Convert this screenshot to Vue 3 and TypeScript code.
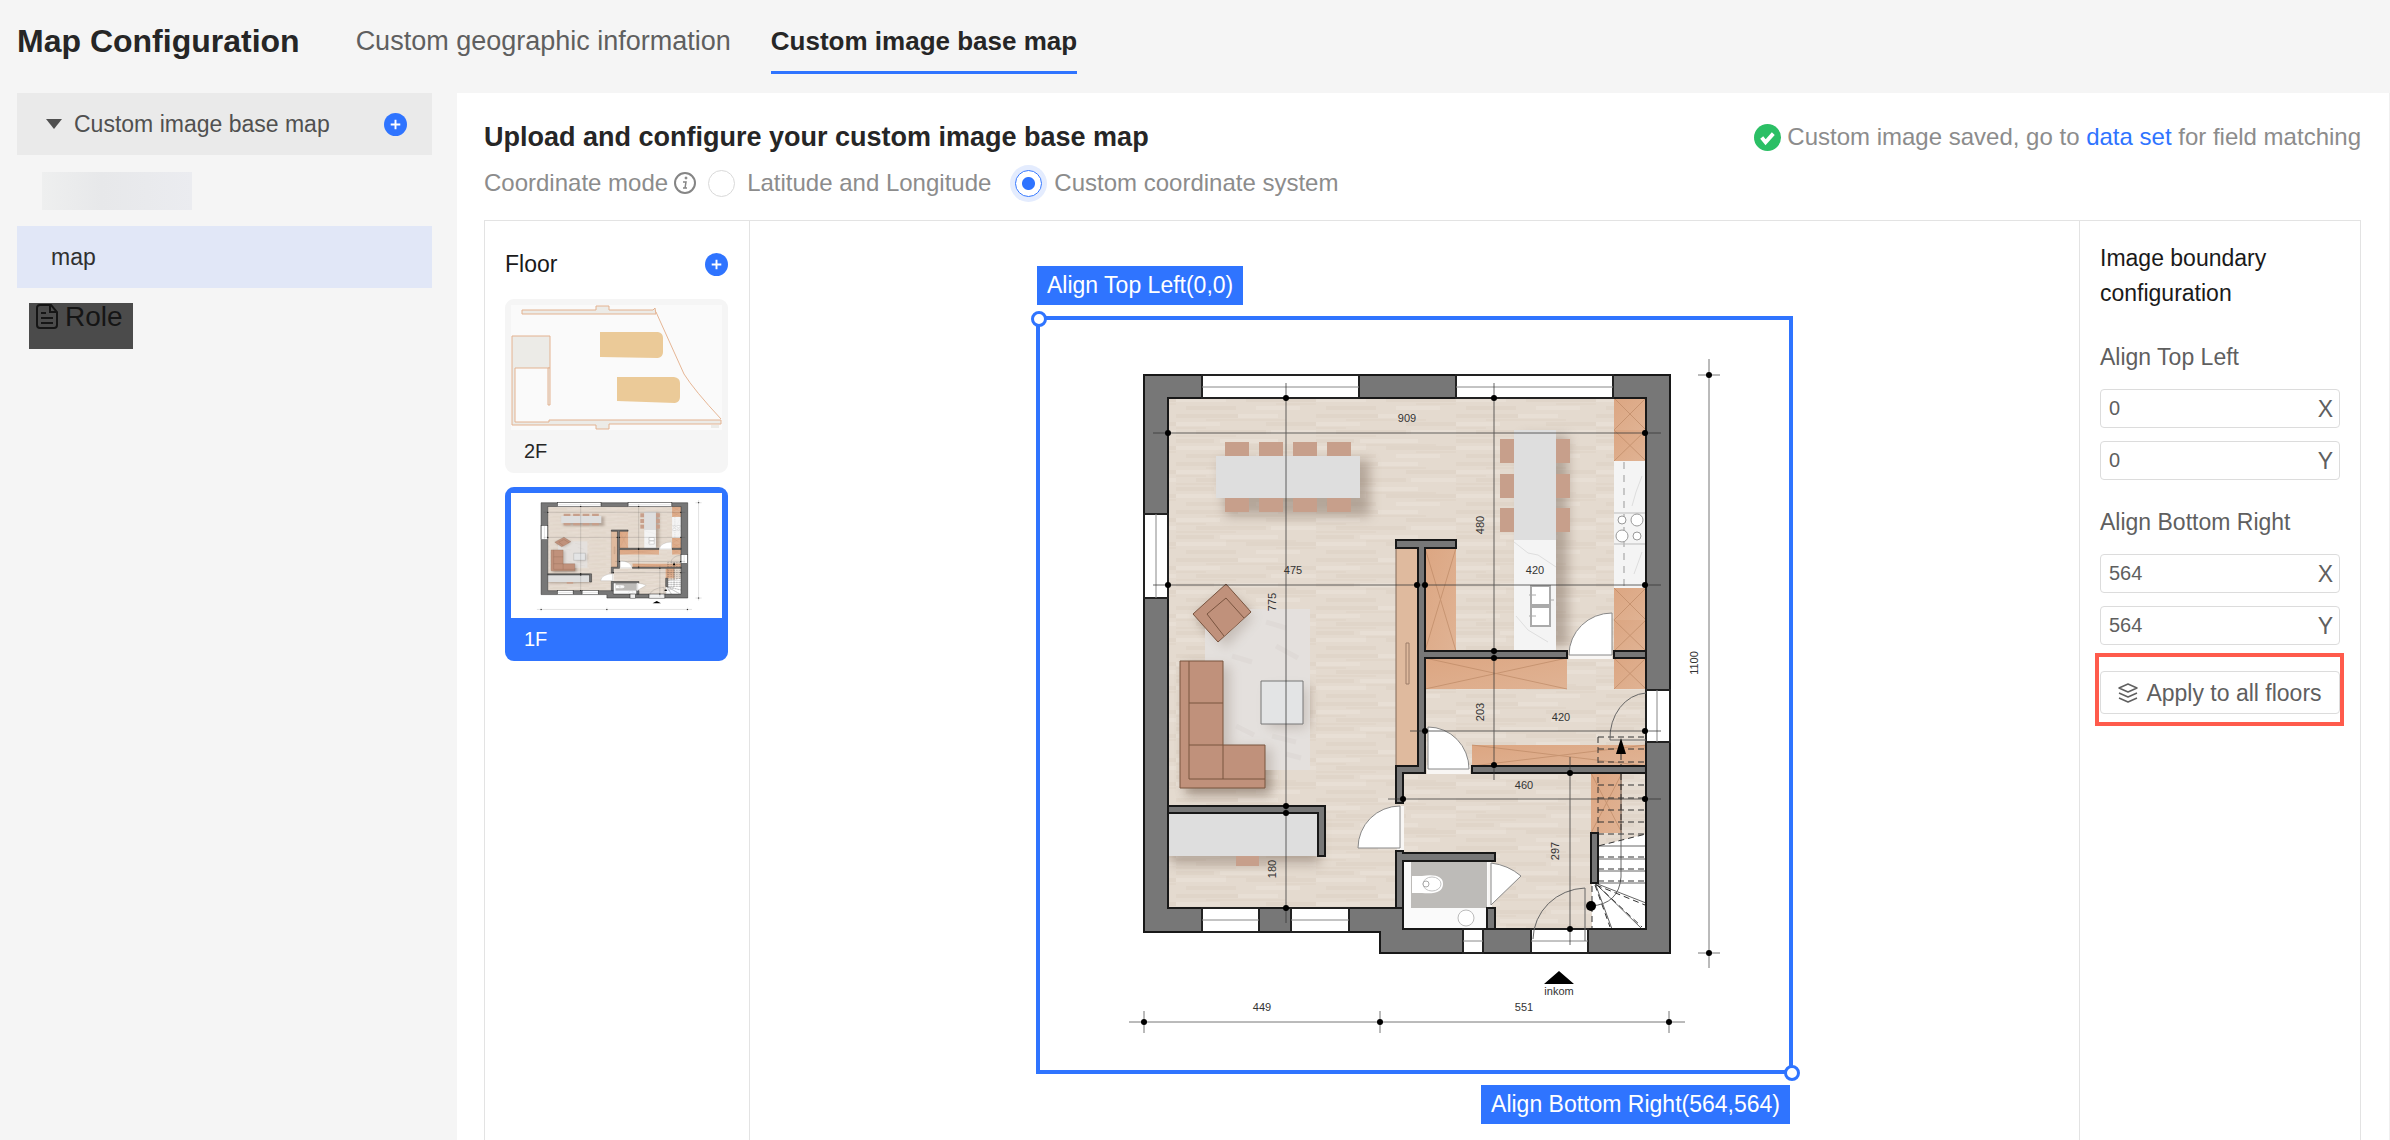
<script setup lang="ts">
import { computed, reactive, ref } from 'vue'

interface Floor {
  id: string
  name: string
}
interface Corner {
  key: string
  title: string
  x: string
  y: string
}
interface Dimension {
  text: string
  x: number
  y: number
  upright?: boolean
}
type Box = [number, number, number, number]

const tabs = ['Custom geographic information', 'Custom image base map']
const activeTab = ref(tabs[1])

const floors: Floor[] = [
  { id: 'f2', name: '2F' },
  { id: 'f1', name: '1F' },
]
const activeFloor = ref('f1')
const mode = ref('custom')

const corners = reactive<Corner[]>([
  { key: 'tl', title: 'Align Top Left', x: '0', y: '0' },
  { key: 'br', title: 'Align Bottom Right', x: '564', y: '564' },
])
const topLeft = computed(() => `${corners[0].title}(${corners[0].x},${corners[0].y})`)
const bottomRight = computed(() => `${corners[1].title}(${corners[1].x},${corners[1].y})`)

/* Boxes are x, y, width, height in plan units. */
const windows: Box[] = [
  [166, 59, 157, 23],
  [420, 59, 157, 23],
  [108, 198, 24, 84],
  [166, 592, 57, 24],
  [255, 592, 58, 24],
  [427, 613, 20, 24],
  [495, 613, 57, 24],
  [610, 374, 24, 52],
]
const chairs: Box[] = [
  ...[189, 223, 257, 291].flatMap((x): Box[] => [
    [x, 126, 24, 14],
    [x, 182, 24, 14],
  ]),
  ...[123, 158, 192].flatMap((y): Box[] => [
    [464, y, 14, 24],
    [520, y, 14, 24],
  ]),
]
const cabinets: Box[] = [
  [389, 232, 31, 103],
  [578, 82, 32, 32],
  [578, 114, 32, 31],
  [578, 272, 32, 32],
  [578, 304, 32, 31],
  [389, 342, 142, 31],
  [578, 342, 32, 31],
  [436, 429, 174, 21],
  [555, 457, 31, 60],
]
const dots: [number, number][] = [
  [132, 117], [609, 117], [132, 269], [381, 269], [389, 269], [609, 269],
  [250, 82], [250, 490], [250, 497], [250, 592],
  [458, 82], [458, 335], [458, 342], [458, 449],
  [389, 415], [609, 415], [367, 483], [609, 483], [534, 457], [534, 613],
  [673, 59], [673, 637], [108, 706], [344, 706], [633, 706],
]
const dimensions: Dimension[] = [
  { text: '909', x: 371, y: 102 },
  { text: '475', x: 257, y: 254 },
  { text: '420', x: 499, y: 254 },
  { text: '775', x: 236, y: 286, upright: true },
  { text: '480', x: 444, y: 209, upright: true },
  { text: '203', x: 444, y: 396, upright: true },
  { text: '420', x: 525, y: 401 },
  { text: '460', x: 488, y: 469 },
  { text: '297', x: 519, y: 535, upright: true },
  { text: '180', x: 236, y: 553, upright: true },
  { text: '1100', x: 658, y: 347, upright: true },
  { text: '449', x: 226, y: 691 },
  { text: '551', x: 488, y: 691 },
  { text: 'inkom', x: 523, y: 675 },
]
const crossPath = ([x, y, w, h]: Box) => `M${x} ${y}l${w} ${h}M${x + w} ${y}l${-w} ${h}`
</script>

<template>
  <div class="page">
    <svg class="defs" aria-hidden="true">
      <defs>
        <pattern id="wood" width="140" height="48" patternUnits="userSpaceOnUse">
          <rect width="140" height="48" fill="#e4dacf" />
          <path d="M0 4h62M90 12h50M20 20h70M0 29h38M70 36h70M10 44h50" stroke="#e0d5c9" stroke-width="4" />
          <path d="M62 4h40M0 12h44M95 20h45M44 29h58M0 36h50M80 44h44" stroke="#e8dfd5" stroke-width="4" />
          <path d="M30 8h80M0 24h60M50 33h70M100 40h40M0 16h30" stroke="#dfd3c6" />
        </pattern>
        <linearGradient id="cabinet" x2="1" y2="1">
          <stop offset="0" stop-color="#dca682" />
          <stop offset="1" stop-color="#e0b394" />
        </linearGradient>
        <filter id="soft" x="-30%" y="-30%" width="160%" height="160%">
          <feGaussianBlur stdDeviation="6" />
        </filter>
      </defs>
      <symbol id="plan" viewBox="0 0 757 758" preserveAspectRatio="none">
        <path d="M132 82H610V613H367V592H132z" fill="url(#wood)" />
        <g fill="#6e5a4c" opacity=".4" filter="url(#soft)">
          <path d="M184 144H334V200H190zM486 120H532V330H486zM150 350H192V432H234V478H150zM230 370H272V412H230zM134 500H284V548H134zM160 300L190 276L218 300L186 332z" />
        </g>
        <!-- living room -->
        <path d="M169 293H274V454H169z" fill="#e4e0dd" />
        <g fill="#6e5a4c" opacity=".25" filter="url(#soft)">
          <path d="M150 350H194V432H236V478H150zM232 372H270V412H232zM165 304L190 284L218 300L190 332z" />
        </g>
        <path d="M176 300l12 9M230 306l20 6M240 330l22 12M196 340l20 6M236 420l24 6M200 410l18 9M250 438l15 4" stroke="#d4ceca" stroke-width="5" opacity=".3" />
        <g class="chair">
          <rect v-for="(c, i) in chairs" :key="i" :x="c[0]" :y="c[1]" :width="c[2]" :height="c[3]" />
          <path d="M200 540h23v10h-23z" />
        </g>
        <path d="M180 140H324V182H180zM132 497H282V540H132zM478 114H520V224H478z" fill="#dedede" />
        <g class="seat">
          <path d="M190 268L215 296L182 326L157 298z" />
          <path d="M208 302L190 282L171 298L188 320" />
          <path d="M144 345H187V429H229V472H144z" />
          <path d="M153 345V463H229M153 387H187M153 429H187V463" fill="none" />
        </g>
        <path d="M225 365h42v43h-42z" fill="#e3e4e5" stroke="#777" />
        <!-- cabinets -->
        <path d="M360 232h22v218h-22z" fill="#dfba9e" stroke="#806858" />
        <path d="M370 327h3v41h-3z" fill="none" stroke="#9c7d68" />
        <g v-for="(c, i) in cabinets" :key="i">
          <rect :x="c[0]" :y="c[1]" :width="c[2]" :height="c[3]" fill="url(#cabinet)" />
          <path :d="crossPath(c)" stroke="#b88460" opacity=".6" />
        </g>
        <!-- kitchen -->
        <path d="M578 145h32v127h-32zM478 224h42v110h-42z" fill="#f4f4f4" />
        <path d="M478 226l14 11 10 2 18 12M480 300l12 14 20 12M606 160l-6 16-4 14M606 236l-8 22" fill="none" stroke="#dedede" />
        <path d="M588 146V270" stroke="#999" stroke-dasharray="7 6" />
        <path d="M578 197h32M578 228h32" stroke="#bbb" />
        <g fill="#fff" stroke="#999">
          <circle cx="586" cy="204" r="4" />
          <circle cx="601" cy="204" r="6" />
          <circle cx="586" cy="220" r="6" />
          <circle cx="601" cy="220" r="4" />
        </g>
        <g fill="#fff" stroke="#aaa" stroke-width="2">
          <path d="M495 270h19v19h-19zM495 291h19v19h-19z" />
          <path d="M493 279h7M493 300h7M514 284h4" stroke-width="1" />
        </g>
        <!-- bathroom -->
        <path d="M367 545H455V613H367z" fill="#fafafa" />
        <path d="M375 545H451V592H375z" fill="#bdbbb8" />
        <path d="M376 560h10q21-3 21 8t-21 9h-10z" fill="#fff" />
        <ellipse cx="396" cy="568" rx="9" ry="7" fill="#fff" stroke="#c4c4c4" />
        <circle cx="390" cy="568" r="3" fill="#fff" stroke="#aaa" />
        <circle cx="430" cy="602" r="8" fill="#fff" stroke="#bbb" />
        <!-- stairs -->
        <path d="M562 530L610 518V613H556V567H562z" fill="#fff" />
        <g fill="none" stroke="#666">
          <path d="M562 530H610M562 543H610M562 555H610M562 567H610M559 567L610 587M559 567L606 613M559 567L576 613" />
          <path d="M585 457V561Q583 588 555 590" />
        </g>
        <path
          d="M562 421H610M562 433H610M562 446H610M562 469H610M562 482H610M562 494H610M562 506H610M562 518H610M562 541H610M562 553H610M562 565H610M562 421V530L610 518M585 438V518M560 569L609 589M561 569L606 611M559 569L574 611M556 570V613"
          fill="none" stroke="#333" stroke-dasharray="6 4"
        />
        <!-- walls -->
        <path class="wall" fill-rule="evenodd" d="M108 59H634V637H344V616H108zM132 82V592H367V613H610V82z" />
        <path class="wall" d="M360 224H420V232H389V335H531V342H389V457H367V487H360V450H382V232H360z" />
        <path class="wall" d="M578 335h32v7h-32zM436 450h174v7h-174zM555 517h7v50h-7zM451 592h8v21h-8z" />
        <path class="wall" d="M360 535H367V537H459V545H367V592H360z" />
        <path class="wall" d="M132 490H289V540H282V497H132z" />
        <g fill="#fff" stroke="#222" stroke-width="2">
          <rect v-for="(w, i) in windows" :key="i" :x="w[0]" :y="w[1]" :width="w[2]" :height="w[3]" />
        </g>
        <path d="M166 71H323M420 71H577M120 198V282M166 604H223M255 604H313M427 625H447M495 625H552M621 374V426" stroke="#888" />
        <!-- doors -->
        <path d="M533 335h43v8h-43zM391 449h43v9h-43zM361 490h7v44h-7zM452 546h4v45h-4z" fill="#f8f6f4" />
        <g fill="#fff" stroke="#888">
          <path d="M533 339A43 42 0 0 1 576 297V339z" />
          <path d="M392 411A41 42 0 0 1 433 453H392z" />
          <path d="M322 532A42 42 0 0 1 364 490V532z" />
          <path d="M455 547Q472 549 485 560L455 589z" />
        </g>
        <path d="M610 377A38 45 0 0 0 574 424H610M497 623A54 52 0 0 1 549 572V625" fill="none" stroke="#666" />
        <!-- dimension lines -->
        <path
          d="M117 117H625M117 269H625M250 67V607M458 67V464M374 415H625M352 483H625M534 441V629"
          stroke="#333" opacity=".75"
        />
        <path d="M673 43V652M662 59H684M662 637H684M93 706H649M108 695V717M344 695V717M633 695V717" stroke="#777" />
        <circle v-for="(d, i) in dots" :key="i" :cx="d[0]" :cy="d[1]" r="3" />
        <circle cx="555" cy="590" r="5" />
        <path d="M585 422l5 16h-10zM523 655l15 13h-30z" />
      </symbol>
    </svg>

    <header class="top">
      <h1>Map Configuration</h1>
      <nav class="tabs">
        <button
          v-for="tab in tabs" :key="tab" type="button" class="tab"
          :class="{ active: tab === activeTab }" @click="activeTab = tab"
        >{{ tab }}</button>
      </nav>
    </header>

    <div class="body">
      <aside class="side">
        <div class="group">
          <svg class="caret" viewBox="0 0 16 10"><path d="M0 0h16L8 10z" fill="#505050" /></svg>
          <span class="group-name">Custom image base map</span>
          <button type="button" class="plus" aria-label="Add map">
            <svg viewBox="0 0 24 24"><circle cx="12" cy="12" r="12" fill="#2f74ff" /><path d="M12 7v10M7 12h10" stroke="#fff" stroke-width="2" /></svg>
          </button>
        </div>
        <div class="hidden-name"></div>
        <button type="button" class="entry">map</button>
        <div class="role">
          <svg viewBox="0 0 22 26" fill="none" stroke="#151515" stroke-width="2">
            <path d="M4 2h11l6 7v13q0 3-3 3H4q-3 0-3-3V5q0-3 3-3zM14 2v7h7" />
            <path d="M5 10h5M5 15h12M5 20h12" />
          </svg>
          <span>Role</span>
        </div>
      </aside>

      <main class="main">
        <div class="heading">
          <h2>Upload and configure your custom image base map</h2>
          <p class="status">
            <svg viewBox="0 0 28 28"><circle cx="14" cy="14" r="14" fill="#2bbf65" /><path d="M8 14l4 5 8-9" fill="none" stroke="#fff" stroke-width="4" /></svg>
            <span>Custom image saved, go to <a href="#dataset">data set</a> for field matching</span>
          </p>
        </div>

        <div class="modes" role="radiogroup" aria-label="Coordinate mode">
          <span>Coordinate mode</span>
          <svg class="info" viewBox="0 0 24 24" fill="none" stroke="#858585">
            <circle cx="12" cy="12" r="10" stroke-width="2" />
            <path d="M10 11h3l-1 6M10 17h4" stroke-width="1.5" />
            <circle cx="13" cy="7" r="1" fill="#858585" />
          </svg>
          <label class="mode"><input v-model="mode" type="radio" name="mode" value="latlng" />Latitude and Longitude</label>
          <label class="mode"><input v-model="mode" type="radio" name="mode" value="custom" />Custom coordinate system</label>
        </div>

        <div class="workspace">
          <section class="floors">
            <div class="floors-head">
              <h3>Floor</h3>
              <button type="button" class="plus" aria-label="Add floor">
                <svg viewBox="0 0 24 24"><circle cx="12" cy="12" r="12" fill="#2f74ff" /><path d="M12 7v10M7 12h10" stroke="#fff" stroke-width="2" /></svg>
              </button>
            </div>
            <button
              v-for="floor in floors" :key="floor.id" type="button" class="card"
              :class="{ active: floor.id === activeFloor }" @click="activeFloor = floor.id"
            >
              <svg v-if="floor.id === 'f1'" class="thumb white" viewBox="0 0 211 125">
                <use href="#plan" width="211" height="125" />
              </svg>
              <svg v-else class="thumb" viewBox="0 0 211 125">
                <g fill="#ecebe7" stroke="#e3b290">
                  <path d="M11 5H85V1H98V5H142L144 3L145 9H11z" />
                  <path d="M1 31H39V63H4V117H38V115H210V119H98V124H85V120H1z" />
                  <path d="M37 63h2v37h-2z" />
                </g>
                <path d="M145 7L173 69Q183 85 210 114" fill="none" stroke="#e6b695" />
                <path d="M200 120h8v3h-8z" fill="#ecebe7" />
                <path d="M89 27H147Q152 28 152 33V47Q152 52 147 53L89 52zM106 72H163Q169 73 169 78V92Q169 97 164 98L106 96z" fill="#ebca98" />
              </svg>
              <span>{{ floor.name }}</span>
            </button>
          </section>

          <section class="canvas">
            <div class="stage">
              <svg class="drawing" viewBox="0 0 757 758">
                <use href="#plan" width="757" height="758" />
                <text
                  v-for="(d, i) in dimensions" :key="i" class="dim"
                  :transform="`translate(${d.x} ${d.y})${d.upright ? ' rotate(-90)' : ''}`" y="4"
                >{{ d.text }}</text>
              </svg>
              <div class="frame"></div>
              <span class="tag tag-start">{{ topLeft }}</span>
              <span class="tag tag-end">{{ bottomRight }}</span>
              <i class="handle handle-start"></i>
              <i class="handle handle-end"></i>
            </div>
          </section>

          <section class="bounds">
            <h3>Image boundary configuration</h3>
            <fieldset v-for="corner in corners" :key="corner.key">
              <legend>{{ corner.title }}</legend>
              <div class="field">
                <input :id="`${corner.key}-x`" v-model="corner.x" type="text" />
                <label :for="`${corner.key}-x`">X</label>
              </div>
              <div class="field">
                <input :id="`${corner.key}-y`" v-model="corner.y" type="text" />
                <label :for="`${corner.key}-y`">Y</label>
              </div>
            </fieldset>
            <div class="apply">
              <button type="button">
                <svg viewBox="0 0 20 20" fill="none" stroke="#606060" stroke-width="1.5">
                  <path d="M10 1l9 4-9 4-9-4zM1 10l9 4 9-4M1 15l9 4 9-4" stroke-linejoin="round" />
                </svg>
                Apply to all floors
              </button>
            </div>
          </section>
        </div>
      </main>
    </div>
  </div>
</template>

<style>
body {
  margin: 0;
  background: #f5f5f5;
}
</style>

<style scoped>
.page {
  display: flex;
  flex-direction: column;
  height: 100vh;
  min-height: 720px;
  overflow: hidden;
  background: #f5f5f5;
  color: #5f5f5f;
  font: 23px/36px "Liberation Sans", Arial, sans-serif;
}
.page * {
  box-sizing: border-box;
}
.defs {
  position: absolute;
  width: 0;
  height: 0;
}
button {
  padding: 0;
  border: 0;
  background: none;
  color: inherit;
  font: inherit;
  text-align: left;
  cursor: pointer;
}
h1,
h2,
h3,
p {
  margin: 0;
  font-size: inherit;
  font-weight: 400;
}
.top {
  display: flex;
  flex: none;
  gap: 56px;
  height: 93px;
  padding: 23px 17px 0;
}
h1 {
  color: #262626;
  font-size: 32px;
  font-weight: 700;
}
.tabs {
  display: flex;
  align-items: flex-start;
  gap: 40px;
}
.tab {
  padding-bottom: 12px;
  border-bottom: 3px solid transparent;
  font-size: 27px;
  line-height: 36px;
}
.tab.active {
  border-color: #2f74ff;
  color: #262626;
  font-size: 26px;
  font-weight: 700;
}
.body {
  display: flex;
  flex: 1;
  min-height: 0;
}
.side {
  flex: none;
  width: 457px;
  padding: 0 25px 0 17px;
}
.group {
  display: flex;
  align-items: center;
  height: 62px;
  padding: 0 25px 0 29px;
  background: #eaeaea;
}
.caret {
  width: 16px;
  height: 10px;
  margin-right: 12px;
}
.group-name {
  flex: 1;
  color: #505050;
}
.plus {
  flex: none;
  width: 23px;
  height: 23px;
}
.plus svg {
  display: block;
  width: 100%;
}
.hidden-name {
  width: 150px;
  height: 38px;
  margin: 17px 25px 16px;
  background: linear-gradient(90deg, #eeefef, #e7e8ea 40%, #ebecf0);
}
.entry {
  display: block;
  width: 100%;
  height: 62px;
  padding-left: 34px;
  background: #e1e7f7;
  color: #303030;
}
.role {
  display: flex;
  gap: 7px;
  width: 104px;
  height: 46px;
  margin: 15px 12px;
  padding-left: 7px;
  background: #4b4b4b;
  color: #151515;
  font-size: 28px;
  line-height: 28px;
}
.role svg {
  width: 22px;
  height: 26px;
}
.main {
  display: flex;
  flex: 1;
  flex-direction: column;
  min-width: 0;
  padding: 26px 28px 0 27px;
  border-right: 1px solid #f0f0f0;
  background: #fff;
}
.heading {
  display: flex;
  justify-content: space-between;
  margin-bottom: 10px;
}
h2 {
  color: #262626;
  font-size: 27px;
  font-weight: 700;
}
.status {
  display: flex;
  align-items: center;
  gap: 6px;
  color: #8c8c8c;
  font-size: 24px;
}
.status svg {
  width: 27px;
  height: 27px;
}
.status a {
  color: #2f74ff;
  text-decoration: none;
}
.modes {
  display: flex;
  align-items: center;
  height: 36px;
  margin-bottom: 19px;
  color: #8c8c8c;
  font-size: 24px;
}
.info {
  width: 24px;
  height: 24px;
  margin: 0 11px 0 5px;
}
.mode {
  display: flex;
  align-items: center;
  gap: 12px;
  margin-right: 24px;
}
.mode input {
  width: 27px;
  height: 27px;
  margin: 0;
  border: 1px solid #d9d9d9;
  border-radius: 50%;
  appearance: none;
}
.mode input:checked {
  border-color: #2f74ff;
  background: radial-gradient(circle, #2f74ff 6px, #fff 7px);
  box-shadow: 0 0 0 5px #e4ecfe;
}
.workspace {
  display: flex;
  flex: 1;
  min-height: 0;
  border: 1px solid #e3e3e3;
  border-bottom: 0;
}
.floors {
  flex: none;
  width: 265px;
  padding: 24px 21px 0 20px;
  border-right: 1px solid #e3e3e3;
}
.floors-head {
  display: flex;
  align-items: center;
  justify-content: space-between;
  height: 54px;
  padding-bottom: 16px;
}
h3 {
  color: #1a1a1a;
}
.card {
  display: block;
  width: 100%;
  height: 174px;
  margin-bottom: 14px;
  padding: 6px;
  border-radius: 9px;
  background: #f5f5f5;
  color: #262626;
  font-size: 20px;
}
.card.active {
  background: #2f74ff;
  color: #fff;
}
.thumb {
  display: block;
  width: 100%;
  height: 125px;
  background: #fafafa;
}
.thumb.white {
  background: #fff;
}
.card span {
  display: block;
  padding: 3px 13px 4px;
}
.canvas {
  display: flex;
  flex: 1;
  justify-content: center;
  min-width: 0;
  padding-top: 95px;
}
.stage {
  position: relative;
  flex: none;
  width: 757px;
  height: 758px;
}
.drawing {
  display: block;
  width: 100%;
  height: 100%;
}
.wall {
  fill: #777;
  stroke: #181818;
  stroke-width: 2;
}
.chair {
  fill: #c79f8b;
}
.seat {
  fill: #c0917b;
  stroke: #79543f;
}
.dim {
  fill: #333;
  font-size: 11px;
  text-anchor: middle;
}
.frame {
  position: absolute;
  inset: 0;
  border: 4px solid #2f74ff;
}
.tag {
  position: absolute;
  padding: 0 10px;
  background: #2f74ff;
  color: #fff;
  line-height: 39px;
  white-space: nowrap;
}
.tag-start {
  bottom: 100%;
  left: 1px;
  margin-bottom: 11px;
}
.tag-end {
  top: 100%;
  right: 3px;
  margin-top: 11px;
}
.handle {
  position: absolute;
  width: 16px;
  height: 16px;
  border: 3px solid #2f74ff;
  border-radius: 50%;
  background: #fff;
}
.handle-start {
  top: -5px;
  left: -5px;
}
.handle-end {
  right: -7px;
  bottom: -7px;
}
.bounds {
  flex: none;
  width: 281px;
  padding: 20px 20px 0;
  border-left: 1px solid #e3e3e3;
}
.bounds h3,
legend {
  line-height: 35px;
}
fieldset {
  min-width: 0;
  margin: 0;
  padding: 29px 0 0;
  border: 0;
}
legend {
  float: left;
  width: 100%;
  margin-bottom: 14px;
  padding: 0;
}
fieldset + fieldset {
  padding-top: 25px;
}
.field {
  display: flex;
  align-items: center;
  clear: both;
  height: 39px;
  padding: 0 6px 0 8px;
  border: 1px solid #dcdcdc;
  border-radius: 4px;
}
.field + .field {
  margin-top: 13px;
}
.field input {
  flex: 1;
  width: 0;
  min-width: 0;
  padding: 0;
  border: 0;
  outline: 0;
  background: none;
  color: #5f5f5f;
  font: 20px "Liberation Sans", Arial, sans-serif;
}
.apply {
  position: relative;
  margin-top: 26px;
}
.apply::after {
  position: absolute;
  inset: -18px -4px -12px -5px;
  border: 4px solid #ff5b4c;
  content: "";
  pointer-events: none;
}
.apply button {
  display: flex;
  align-items: center;
  justify-content: center;
  gap: 8px;
  width: 100%;
  height: 43px;
  border: 1px solid #dcdcdc;
  border-radius: 4px;
  white-space: nowrap;
}
.apply svg {
  width: 20px;
  height: 20px;
}
</style>
